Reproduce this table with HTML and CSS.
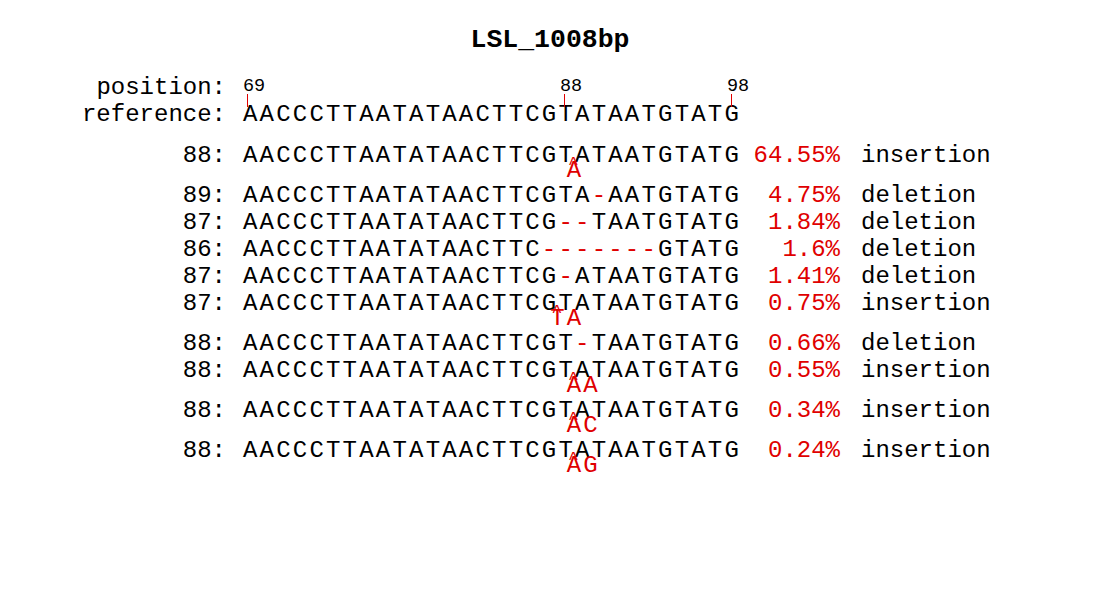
FILE: index.html
```html
<!DOCTYPE html>
<html lang="en">
<head>
  <meta charset="UTF-8">
  <title>LSL_1008bp</title>
  <link rel="stylesheet" href="styles.css">
</head>
<body>
  <main class="plot">
    <h1 class="title">LSL_1008bp</h1>

    <div class="row axis">
      <span class="label">position:</span>
      <span class="ticks">
        <span class="tick" style="left: 0px">69</span>
        <span class="tick" style="left: 317px">88</span>
        <span class="tick" style="left: 484px">98</span>
      </span>
    </div>
    <div class="row">
      <span class="label">reference:</span>
      <span class="seq">AACCCTTAATATAACTTCGTATAATGTATG</span>
    </div>

    <div class="alleles">
      <div class="row has-ins">
        <span class="label">88:</span>
        <span class="seq">AACCCTTAATATAACTTCGT<span class="ins"><span class="caret">^</span><span class="added">A</span></span>ATAATGTATG</span>
        <span class="pct">64.55%</span>
        <span class="kind">insertion</span>
      </div>
      <div class="row">
        <span class="label">89:</span>
        <span class="seq">AACCCTTAATATAACTTCGTA<span class="del">-</span>AATGTATG</span>
        <span class="pct">4.75%</span>
        <span class="kind">deletion</span>
      </div>
      <div class="row">
        <span class="label">87:</span>
        <span class="seq">AACCCTTAATATAACTTCG<span class="del">--</span>TAATGTATG</span>
        <span class="pct">1.84%</span>
        <span class="kind">deletion</span>
      </div>
      <div class="row">
        <span class="label">86:</span>
        <span class="seq">AACCCTTAATATAACTTC<span class="del">-------</span>GTATG</span>
        <span class="pct">1.6%</span>
        <span class="kind">deletion</span>
      </div>
      <div class="row">
        <span class="label">87:</span>
        <span class="seq">AACCCTTAATATAACTTCG<span class="del">-</span>ATAATGTATG</span>
        <span class="pct">1.41%</span>
        <span class="kind">deletion</span>
      </div>
      <div class="row has-ins">
        <span class="label">87:</span>
        <span class="seq">AACCCTTAATATAACTTCG<span class="ins"><span class="caret">^</span><span class="added">TA</span></span>TATAATGTATG</span>
        <span class="pct">0.75%</span>
        <span class="kind">insertion</span>
      </div>
      <div class="row">
        <span class="label">88:</span>
        <span class="seq">AACCCTTAATATAACTTCGT<span class="del">-</span>TAATGTATG</span>
        <span class="pct">0.66%</span>
        <span class="kind">deletion</span>
      </div>
      <div class="row has-ins">
        <span class="label">88:</span>
        <span class="seq">AACCCTTAATATAACTTCGT<span class="ins"><span class="caret">^</span><span class="added">AA</span></span>ATAATGTATG</span>
        <span class="pct">0.55%</span>
        <span class="kind">insertion</span>
      </div>
      <div class="row has-ins">
        <span class="label">88:</span>
        <span class="seq">AACCCTTAATATAACTTCGT<span class="ins"><span class="caret">^</span><span class="added">AC</span></span>ATAATGTATG</span>
        <span class="pct">0.34%</span>
        <span class="kind">insertion</span>
      </div>
      <div class="row has-ins">
        <span class="label">88:</span>
        <span class="seq">AACCCTTAATATAACTTCGT<span class="ins"><span class="caret">^</span><span class="added">AG</span></span>ATAATGTATG</span>
        <span class="pct">0.24%</span>
        <span class="kind">insertion</span>
      </div>
    </div>
  </main>
</body>
</html>
```

FILE: styles.css
```css
:root {
  --ink: #000;
  --red: #e00000;
}

body {
  margin: 0;
  background: #fff;
  color: var(--ink);
  font-family: 'Liberation Mono', 'DejaVu Sans Mono', monospace;
  font-size: 24px;
}

.plot {
  width: 1100px;
  height: 595px;
}

.title {
  margin: 0 0 19px;
  padding-top: 25px;
  text-align: center;
  font-size: 26.5px;
  line-height: 30px;
  font-weight: 700;
}

.row {
  display: flex;
  height: 27px;
  line-height: 27px;
  white-space: pre;
}

.label {
  flex: none;
  width: 226px;
  text-align: right;
}

.seq {
  flex: none;
  width: 498px;
  margin-left: 17px;
  letter-spacing: 2.2px;
}

.del {
  color: var(--red);
}

.ins {
  position: relative;
  display: inline-block;
  width: 0;
  height: 27px;
  vertical-align: top;
}

.caret,
.added {
  position: absolute;
  color: var(--red);
}

.caret {
  left: -7px;
  top: 9px;
  font-size: 18px;
}

.added {
  left: -8.3px;
  top: 15px;
}

.pct {
  flex: none;
  width: 99px;
  text-align: right;
  color: var(--red);
}

.kind {
  margin-left: 21px;
}

.alleles {
  margin-top: 14px;
}

.has-ins {
  margin-bottom: 13px;
}

/* axis with tick marks above the reference */
.ticks {
  position: relative;
  width: 498px;
  margin-left: 17px;
}

.tick {
  position: absolute;
  top: 4px;
  font-size: 18.5px;
  line-height: 18px;
}

.tick::after {
  content: "";
  position: absolute;
  left: 4px;
  top: 16px;
  width: 1px;
  height: 13px;
  background: var(--red);
}
```
